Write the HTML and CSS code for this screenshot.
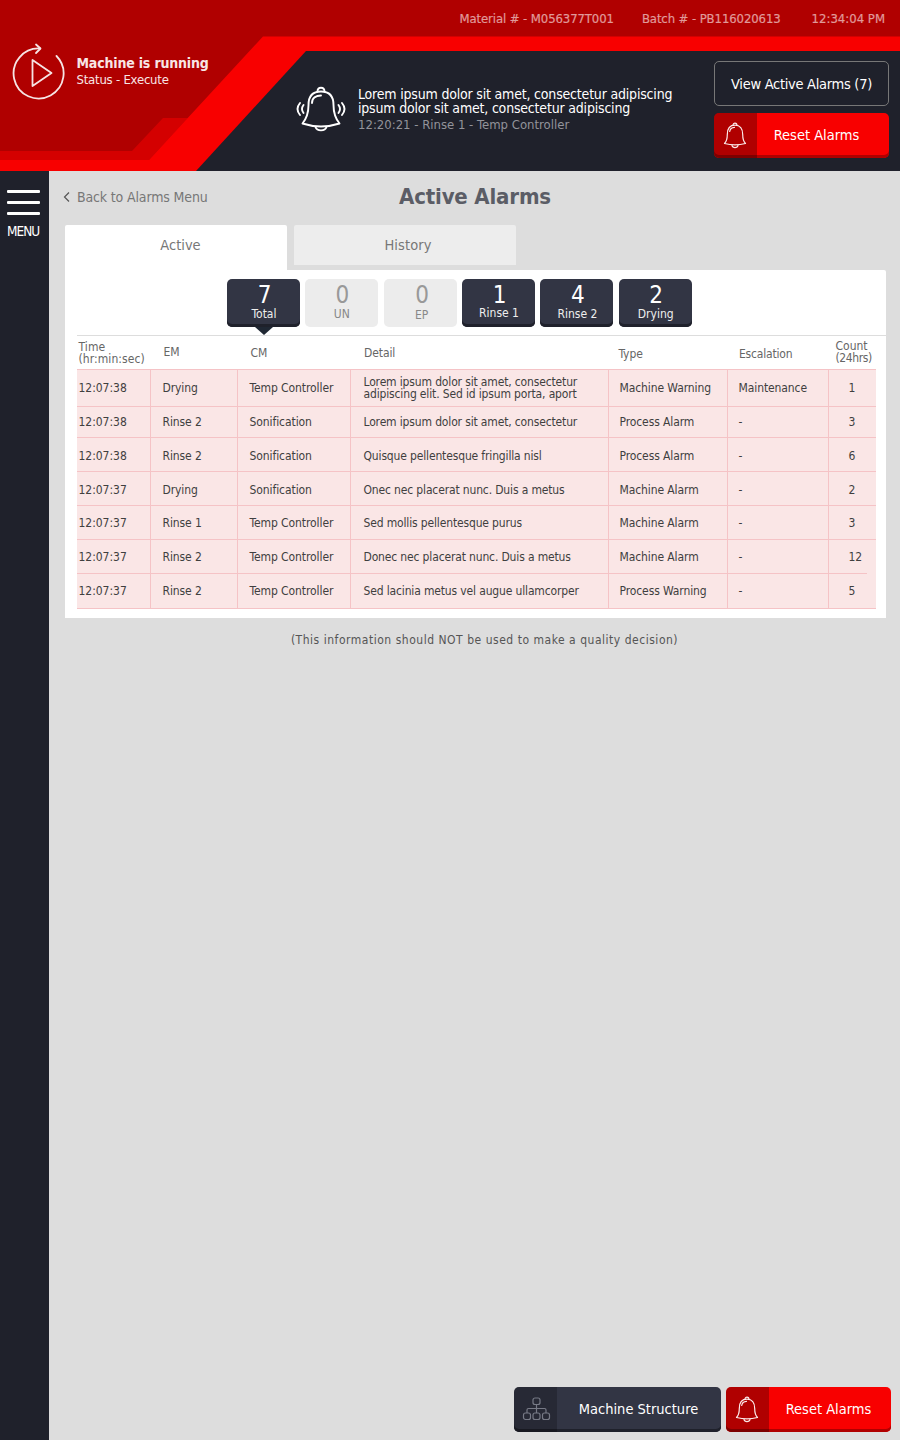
FILE: index.html
```
<!DOCTYPE html>
<html lang="en">
<head>
<meta charset="utf-8">
<title>Active Alarms</title>
<link rel="stylesheet" href="styles.css">
</head>
<body>
<svg width="0" height="0" class="defs">
  <symbol id="bell" viewBox="0 0 24 27">
    <g fill="none" stroke="currentColor" stroke-width="1.2" stroke-linejoin="round" stroke-linecap="round">
      <path d="M1.500 21.500C4 19 4.300 17 4.300 12.500C4.300 6.500 7 3.200 12 3.200S19.700 6.500 19.700 12.500C19.700 17 20 19 22.500 21.500Q12 24.300 1.500 21.500Z"/>
      <path d="M10 3.400C10 .3 14 .3 14 3.400M9 23.300C9.600 26.300 14.400 26.300 15 23.300M6.700 9.500C7 7.200 8.800 5.500 11.500 5.300"/>
    </g>
  </symbol>
</svg>
<header class="header">
  <svg class="header-bg" width="900" height="171" viewBox="0 0 900 171">
    <rect width="900" height="171" fill="#b00000"/>
    <path d="M0 151H132L163 118H188L149 160H0Z" fill="#d40000"/>
    <path d="M0 160H149L263 36.500H900V171H0Z" fill="#f80000"/>
    <path d="M196 171L306 51H900V171Z" fill="#1f212b"/>
  </svg>
  <div class="status">
    <svg class="run-icon" width="54" height="58" viewBox="0 0 54 58" fill="none" stroke="#f6e4e4" stroke-width="1.800" stroke-linecap="round" stroke-linejoin="round">
      <path d="M44.500 14A25 25 0 1 1 28 6.500"/>
      <path d="M24 2.500L28.500 6.500L24 11"/>
      <path d="M20.500 18V44L39.500 31Z"/>
    </svg>
    <div class="status-text">
      <div class="status-title">Machine is running</div>
      <div class="status-sub">Status - Execute</div>
    </div>
  </div>
  <div class="header-right">
    <div class="meta">
      <span>Material # - M056377T001</span>
      <span class="batch">Batch # - PB116020613</span>
      <span class="clock">12:34:04 PM</span>
    </div>
    <div class="alert">
      <svg class="alert-icon" width="50" height="46" viewBox="0 0 50 46" fill="none" stroke="#fff" stroke-width="1.900" stroke-linecap="round" stroke-linejoin="round">
        <path d="M6.500 37.500C11 32 12.500 27 12.500 19C12.500 9.500 17 5.500 25 5.500S37.500 9.500 37.500 19C37.500 27 39 32 43.500 37.500Q25 43.500 6.500 37.500Z"/>
        <path d="M21.500 5.500C21.500.5 28.500.5 28.500 5.500M19.500 41C21 45.500 29 45.500 30.500 41M16 17C16 12 20 9.500 25 9.500"/>
        <path d="M4 17Q-1 23 4 29M7.500 19Q4.500 23 7.500 27M46 17Q51 23 46 29M42.500 19Q45.500 23 42.500 27"/>
      </svg>
      <div class="alert-text">
        <div>Lorem ipsum dolor sit amet, consectetur adipiscing</div>
        <div>ipsum dolor sit amet, consectetur adipiscing</div>
        <div class="dim">12:20:21 - Rinse 1 - Temp Controller</div>
      </div>
      <div class="alert-actions">
        <button class="btn outline">View Active Alarms (7)</button>
        <button class="btn red"><i><svg width="24" height="27"><use href="#bell"/></svg></i><span>Reset Alarms</span></button>
      </div>
    </div>
  </div>
</header>
<div class="body">
  <nav class="side">
    <div class="bars"><i></i><i></i><i></i></div>
    <span>MENU</span>
  </nav>
  <main class="main">
    <div class="title-row">
      <a class="back"><svg width="7" height="10" viewBox="0 0 7 10" fill="none" stroke="#555" stroke-width="1.200"><path d="M6 .5L1.500 5L6 9.500"/></svg><span>Back to Alarms Menu</span></a>
      <h1>Active Alarms</h1>
    </div>
    <div class="tabs">
      <div class="tab on">Active</div>
      <div class="tab history">History</div>
    </div>
    <section class="panel">
      <div class="tiles">
        <div class="tile sel"><b>7</b><span>Total</span></div>
        <div class="tile off"><b>0</b><span>UN</span></div>
        <div class="tile off ep"><b>0</b><span>EP</span></div>
        <div class="tile first"><b>1</b><span>Rinse 1</span></div>
        <div class="tile"><b>4</b><span>Rinse 2</span></div>
        <div class="tile"><b>2</b><span>Drying</span></div>
      </div>
      <div class="table">
        <div class="thead">
          <div class="h-time">Time<br>(hr:min:sec)</div><div class="h-em">EM</div><div class="h-cm">CM</div><div class="h-detail">Detail</div><div class="h-type">Type</div><div class="h-esc">Escalation</div><div class="h-count">Count<br><span>(24hrs)</span></div>
        </div>
        <div class="row r-a"><div>12:07:38</div><div>Drying</div><div>Temp Controller</div><div class="two">Lorem ipsum dolor sit amet, consectetur<br>adipiscing elit. Sed id ipsum porta, aport</div><div>Machine Warning</div><div>Maintenance</div><div>1</div></div>
        <div class="row r-b"><div>12:07:38</div><div>Rinse 2</div><div>Sonification</div><div>Lorem ipsum dolor sit amet, consectetur</div><div>Process Alarm</div><div>-</div><div>3</div></div>
        <div class="row r-c"><div>12:07:38</div><div>Rinse 2</div><div>Sonification</div><div>Quisque pellentesque fringilla nisl</div><div>Process Alarm</div><div>-</div><div>6</div></div>
        <div class="row r-c"><div>12:07:37</div><div>Drying</div><div>Sonification</div><div>Onec nec placerat nunc. Duis a metus</div><div>Machine Alarm</div><div>-</div><div>2</div></div>
        <div class="row r-d"><div>12:07:37</div><div>Rinse 1</div><div>Temp Controller</div><div>Sed mollis pellentesque purus</div><div>Machine Alarm</div><div>-</div><div>3</div></div>
        <div class="row r-d short"><div>12:07:37</div><div>Rinse 2</div><div>Temp Controller</div><div>Donec nec placerat nunc. Duis a metus</div><div>Machine Alarm</div><div>-</div><div>12</div></div>
        <div class="row r-e"><div>12:07:37</div><div>Rinse 2</div><div>Temp Controller</div><div>Sed lacinia metus vel augue ullamcorper</div><div>Process Warning</div><div>-</div><div>5</div></div>
      </div>
    </section>
    <p class="note">(This information should NOT be used to make a quality decision)</p>
    <footer class="footer">
      <button class="btn navy"><i><svg width="29" height="24" viewBox="0 0 29 24" fill="none" stroke="#777a86" stroke-width="1.200"><rect x="11" y="1" width="7" height="6.500" rx="2"/><rect x="1.500" y="16" width="7" height="6.500" rx="2"/><rect x="11" y="16" width="7" height="6.500" rx="2"/><rect x="20.500" y="16" width="7" height="6.500" rx="2"/><path d="M14.500 7.500V16M5 16V13Q5 11.500 6.500 11.500H22.500Q24 11.500 24 13V16"/></svg></i><span>Machine Structure</span></button>
      <button class="btn red"><i><svg width="24" height="27"><use href="#bell"/></svg></i><span>Reset Alarms</span></button>
    </footer>
  </main>
</div>
</body>
</html>
```
FILE: styles.css
```
* { box-sizing: border-box; }
body { margin: 0; width: 900px; height: 1440px; font-family: "DejaVu Sans Condensed", "DejaVu Sans", sans-serif; font-stretch: condensed; background: #ddd; display: flex; flex-direction: column; overflow: hidden; white-space: nowrap; }
.defs { position: absolute; }

/* Header */
.header { position: relative; height: 171px; display: flex; flex: none; }
.header-bg { position: absolute; left: 0; top: 0; z-index: -1; }
.status { width: 297px; padding: 42px 0 0 12px; display: flex; gap: 10.500px; color: #f8e6e6; }
.status-text { padding-top: 13px; line-height: 16px; }
.status-title { font-size: 14px; font-weight: 700; letter-spacing: -.18px; }
.status-sub { font-size: 13px; letter-spacing: -.22px; line-height: 17px; }
.header-right { flex: 1; }
.meta { height: 37px; padding-right: 15px; display: flex; justify-content: flex-end; align-items: center; font-size: 13px; color: #e09a9a; letter-spacing: -.1px; -webkit-text-stroke: .2px #e09a9a; }
.batch { margin-left: 28px; }
.clock { margin-left: 31px; letter-spacing: 0; }
.alert { display: flex; padding-top: 24px; }
.alert-icon { margin-top: 25px; margin-left: -1px; }
.alert-text { margin-left: 12px; padding-top: 26px; width: 356px; color: #fff; font-size: 14px; line-height: 14px; letter-spacing: -.19px; }
.dim { color: #92939a; font-size: 13px; line-height: 19px; letter-spacing: 0; }
.alert-actions { display: flex; flex-direction: column; gap: 7px; }

/* Buttons */
.btn { font: inherit; border: 0; padding: 0; height: 45px; width: 175px; display: flex; align-items: center; border-radius: 5px; color: #fff; font-size: 14.500px; letter-spacing: 0; overflow: hidden; }
.btn.outline { background: none; border: 1px solid #777; justify-content: center; letter-spacing: -.29px; }
.btn i { width: 43px; height: 45px; display: flex; align-items: center; justify-content: center; background: rgba(0,0,0,.29); flex: none; padding: 0 1px 1px 0; }
.btn i svg { color: #fbe9e9; }
.btn span { flex: 1; text-align: center; padding: 0 3px 2px 0; }
.btn.red { background: #f80000; box-shadow: inset 0 -3px #b00000; }
.alert-actions .btn.red span { padding-right: 13px; }

/* Sidebar */
.body { display: flex; flex: 1; }
.side { width: 49px; background: #1f212b; padding: 19px 0 0 7px; color: #fff; font-size: 13.500px; letter-spacing: -1px; }
.bars { display: flex; flex-direction: column; gap: 8px; margin-bottom: 8px; }
.bars i { width: 33px; height: 3px; background: #fff; border-radius: 1px; }

/* Main */
.main { flex: 1; display: flex; flex-direction: column; }
.title-row { height: 54px; position: relative; padding-left: 14px; display: flex; }
.back { display: flex; align-items: center; gap: 7px; height: 52px; color: #777; font-size: 14px; letter-spacing: -.15px; }
h1 { margin: 0; position: absolute; left: 1px; right: 0; text-align: center; line-height: 52px; font-size: 22px; color: #5b5d66; letter-spacing: -.17px; }
.tabs { display: flex; gap: 7px; padding-left: 16px; height: 45px; }
.tab { width: 222px; height: 40px; background: #ededed; border-radius: 2px 2px 0 0; display: flex; align-items: center; justify-content: center; color: #777; font-size: 14.500px; }
.tab.on { background: #fff; height: 45px; padding: 0 0 5px 9px; }
.history { padding-left: 6px; letter-spacing: .1px; }
.panel { margin-left: 16px; width: 821px; height: 348px; background: #fff; border-radius: 0 2px 0 0; }

/* Counters */
.tiles { display: flex; gap: 5.350px; padding: 9px 0 0 162px; height: 65px; }
.tile { width: 73px; height: 48px; border-radius: 5px; background: #323544; box-shadow: inset 0 -3px #1f212b; color: #eee; text-align: center; font-size: 12px; position: relative; line-height: 14px; padding-left: 1px; }
.tile b { display: block; font-weight: 400; font-size: 24px; line-height: 24px; padding: 4px 0 0 1px; height: 28px; color: #fff; }
.tile.off { background: #ececec; box-shadow: none; color: #888; padding-left: 0; }
.tile.off b { color: #999; padding-top: 5px; line-height: 23px; }
.tile.ep { padding-left: 3px; }
.tile.ep span { position: relative; top: 1px; }
.tile.first b { padding-top: 5px; line-height: 22px; height: 27px; }
.tile.sel::after { content: ""; position: absolute; left: 28px; top: 48px; border: 9px solid transparent; border-top: 8px solid #1f2733; border-bottom: 0; }

/* Alarm table */
.table { border-top: 1px solid #ddd; margin-left: 12px; font-size: 12px; letter-spacing: -.1px; }
.thead, .row { display: grid; grid-template-columns: 74px 87px 113px 258px 119px 101px 47px; width: 799px; color: #3f3f3f; }
.thead { height: 34px; color: #666; line-height: 12px; border-bottom: 1px solid #f5c3c6; }
.h-time { padding: 5px 0 0 1.500px; letter-spacing: .08px; }
.h-em { padding: 10px 0 0 12.500px; }
.h-cm { padding: 11px 0 0 12.500px; }
.h-detail { padding: 11px 0 0 13px; }
.h-type { padding: 12px 0 0 9.500px; }
.h-esc { padding: 12px 0 0 11px; letter-spacing: -.2px; }
.h-count { padding: 4px 0 0 6.500px; letter-spacing: 0; }
.h-count span { letter-spacing: -.4px; }
.row > div { background: #fae6e6; border-right: 1px solid #f5c3c6; border-bottom: 1px solid #f5c3c6; padding-left: 11.500px; display: flex; align-items: center; }
.row > div:first-child { padding-left: 1.500px; letter-spacing: -.03px; }
.row > div:nth-child(3) { letter-spacing: -.08px; }
.row > div:nth-child(4) { padding-left: 12.500px; letter-spacing: -.15px; }
.row > div:nth-child(5), .row > div:nth-child(6) { padding-left: 10.500px; }
.row > div:last-child { padding-left: 19.500px; border-right: 0; }
.row > .two { display: block; line-height: 12px; padding-top: 6px; letter-spacing: -.11px; }
.short > div:last-child { border-bottom: 0; padding-bottom: 1px; background: linear-gradient(#f5c3c6, #f5c3c6) left bottom / 38px 1px no-repeat #fae6e6; }
.r-a { height: 37px; }
.r-b { height: 31px; }
.r-c, .r-d { height: 34px; }
.r-c > div { padding-top: 2px; }
.r-e { height: 35px; }
.note { margin: 15px 0 0; padding-left: 20px; text-align: center; font-size: 12px; color: #555; letter-spacing: .52px; }

/* Footer */
.footer { margin-top: auto; display: flex; gap: 5px; justify-content: flex-end; padding: 0 9px 8px 0; }
.footer .btn { width: 165px; }
.footer .btn.navy { width: 207px; background: #323544; box-shadow: inset 0 -3px #1f212b; }
.footer .btn.navy span { padding-right: 1px; }
.footer .btn.navy i { padding: 0 0 1px 1px; background: rgba(0,0,0,.22); }
```
